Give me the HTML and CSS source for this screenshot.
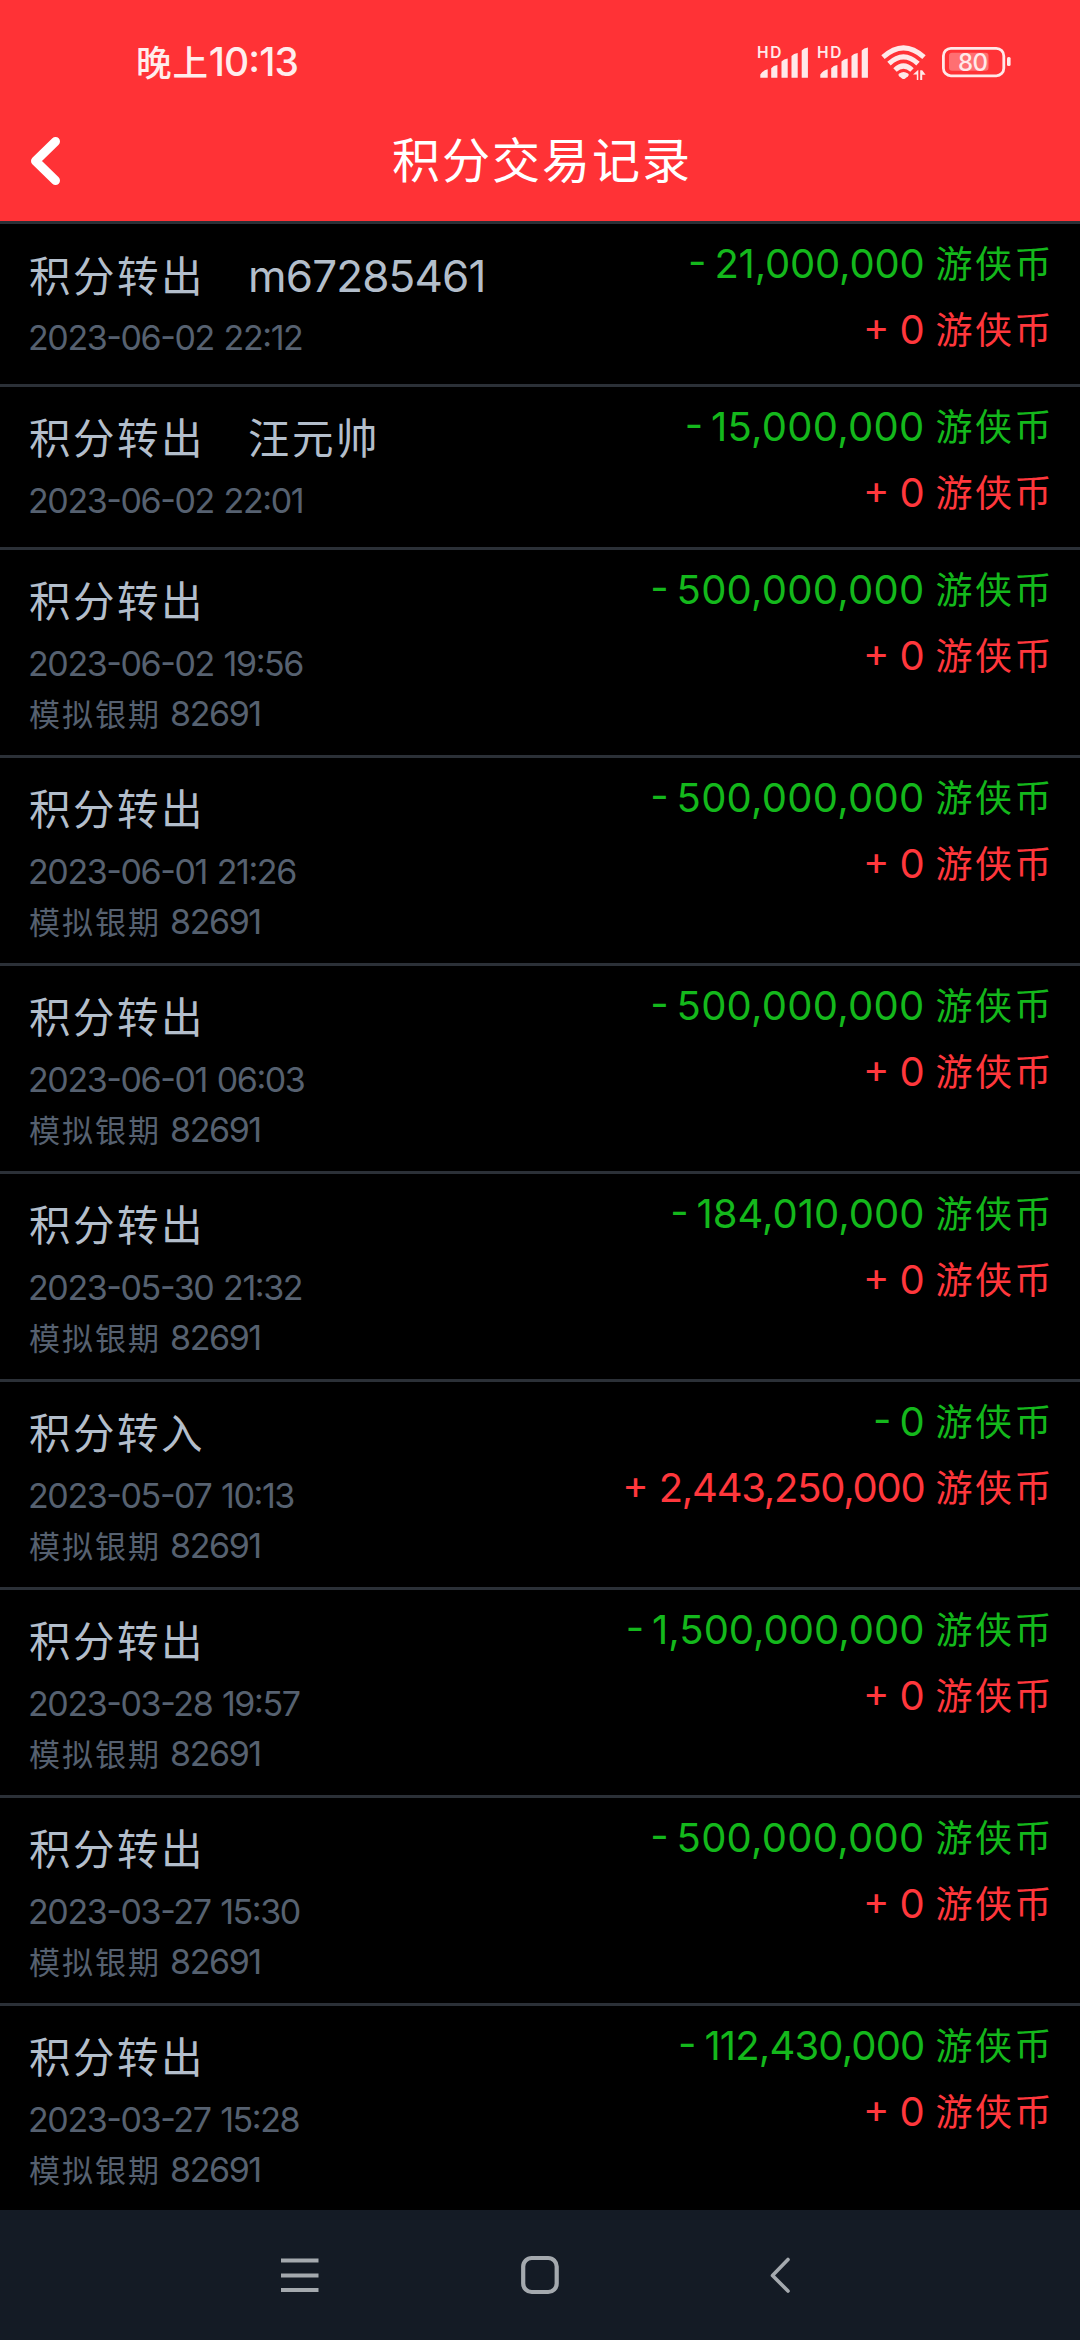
FILE: index.html
```html
<!DOCTYPE html>
<html lang="zh-CN">
<head>
<meta charset="utf-8">
<title>积分交易记录</title>
<link rel="stylesheet" href="styles.css">
</head>
<body>
<div class="screen">
  <header class="header">
    <div class="status">
      <div class="clock"><span class="clock-cjk">晚上</span>10:13</div>
      <svg class="status-icons" viewBox="750 40 265 44" aria-hidden="true">
        <defs>
          <g id="signal">
            <text class="hd" x="756" y="58" textLength="24.5">HD</text>
            <path d="M759.3 77.7v-3.2q3.2-4.400 7.400-5.200v8.400zM770.2 77.700v-9.500q2.300-2.700 6.200-3.200v12.700zM780.500 77.700v-16.200q2.200-2.600 6.200-3v19.200zM790.500 77.700v-21.700q2.200-2.600 6.200-3v24.700zM800.700 77.700v-27.200q2.200-2.600 6.200-3v30.200z"/>
          </g>
        </defs>
        <g class="ink">
          <use href="#signal"/>
          <use href="#signal" x="60"/>
          <path d="M898.200 73.500q4.400-3 8.800 0c1.200 1 .8 1.900 0 2.700l-2.800 2.300q-1.600 1.100-3.200 0l-2.800-2.300c-.9-.8-1.200-1.800 0-2.700z"/>
          <path d="M915.800 80v-5.500h-3.800l5.300-4.800v10.300zM919.200 70.300v9.700h2v-5.200h3.400l-3.400-4.500z"/>
          <rect x="1006" y="57" width="3.6" height="9" rx="1.500"/>
        </g>
        <g class="wave">
          <path d="M882 57.200Q902.500 38.500 923 57.200"/>
          <path d="M888 63.700Q902.500 50.200 917 63.700"/>
          <path d="M894 70Q902.500 62 911 70"/>
        </g>
        <rect class="level" x="948" y="52.700" width="39.500" height="18" rx="3"/>
        <rect class="shell" x="942.400" y="48.400" width="60.400" height="27.400" rx="7.500"/>
        <text class="percent" x="957" y="71" textLength="30">80</text>
      </svg>
    </div>
    <div class="titlebar">
      <svg class="back" viewBox="0 0 40 56" aria-hidden="true"><path d="M29.500 8.500L9.500 28L29.500 47.500"/></svg>
      <h1 class="title">积分交易记录</h1>
    </div>
  </header>
  <main class="list">
    <section class="row short">
      <div class="info">
        <div class="kind"><span class="cjk">积分转出</span><span class="who">m67285461</span></div>
        <div class="meta">2023-06-02 22:12</div>
      </div>
      <div class="sums">
        <div class="sum out"><span>-</span><span class="n">21,000,000</span><span class="unit">游侠币</span></div>
        <div class="sum in"><span>+</span><span class="n">0</span><span class="unit">游侠币</span></div>
      </div>
    </section>
    <section class="row short">
      <div class="info">
        <div class="kind"><span class="cjk">积分转出</span><span class="cjk">汪元帅</span></div>
        <div class="meta">2023-06-02 22:01</div>
      </div>
      <div class="sums">
        <div class="sum out"><span>-</span><span class="n wide">15,000,000</span><span class="unit">游侠币</span></div>
        <div class="sum in"><span>+</span><span class="n">0</span><span class="unit">游侠币</span></div>
      </div>
    </section>
    <section class="row">
      <div class="info">
        <div class="kind"><span class="cjk">积分转出</span></div>
        <div class="meta">2023-06-02 19:56</div>
        <div class="meta"><span class="bank">模拟银期</span>82691</div>
      </div>
      <div class="sums">
        <div class="sum out"><span>-</span><span class="n wide">500,000,000</span><span class="unit">游侠币</span></div>
        <div class="sum in"><span>+</span><span class="n">0</span><span class="unit">游侠币</span></div>
      </div>
    </section>
    <section class="row">
      <div class="info">
        <div class="kind"><span class="cjk">积分转出</span></div>
        <div class="meta">2023-06-01 21:26</div>
        <div class="meta"><span class="bank">模拟银期</span>82691</div>
      </div>
      <div class="sums">
        <div class="sum out"><span>-</span><span class="n wide">500,000,000</span><span class="unit">游侠币</span></div>
        <div class="sum in"><span>+</span><span class="n">0</span><span class="unit">游侠币</span></div>
      </div>
    </section>
    <section class="row">
      <div class="info">
        <div class="kind"><span class="cjk">积分转出</span></div>
        <div class="meta">2023-06-01 06:03</div>
        <div class="meta"><span class="bank">模拟银期</span>82691</div>
      </div>
      <div class="sums">
        <div class="sum out"><span>-</span><span class="n wide">500,000,000</span><span class="unit">游侠币</span></div>
        <div class="sum in"><span>+</span><span class="n">0</span><span class="unit">游侠币</span></div>
      </div>
    </section>
    <section class="row">
      <div class="info">
        <div class="kind"><span class="cjk">积分转出</span></div>
        <div class="meta">2023-05-30 21:32</div>
        <div class="meta"><span class="bank">模拟银期</span>82691</div>
      </div>
      <div class="sums">
        <div class="sum out"><span>-</span><span class="n loose">184,010,000</span><span class="unit">游侠币</span></div>
        <div class="sum in"><span>+</span><span class="n">0</span><span class="unit">游侠币</span></div>
      </div>
    </section>
    <section class="row">
      <div class="info">
        <div class="kind"><span class="cjk">积分转入</span></div>
        <div class="meta">2023-05-07 10:13</div>
        <div class="meta"><span class="bank">模拟银期</span>82691</div>
      </div>
      <div class="sums">
        <div class="sum out"><span>-</span><span class="n">0</span><span class="unit">游侠币</span></div>
        <div class="sum in"><span>+</span><span class="n narrow">2,443,250,000</span><span class="unit">游侠币</span></div>
      </div>
    </section>
    <section class="row">
      <div class="info">
        <div class="kind"><span class="cjk">积分转出</span></div>
        <div class="meta">2023-03-28 19:57</div>
        <div class="meta"><span class="bank">模拟银期</span>82691</div>
      </div>
      <div class="sums">
        <div class="sum out"><span>-</span><span class="n loose">1,500,000,000</span><span class="unit">游侠币</span></div>
        <div class="sum in"><span>+</span><span class="n">0</span><span class="unit">游侠币</span></div>
      </div>
    </section>
    <section class="row">
      <div class="info">
        <div class="kind"><span class="cjk">积分转出</span></div>
        <div class="meta">2023-03-27 15:30</div>
        <div class="meta"><span class="bank">模拟银期</span>82691</div>
      </div>
      <div class="sums">
        <div class="sum out"><span>-</span><span class="n wide">500,000,000</span><span class="unit">游侠币</span></div>
        <div class="sum in"><span>+</span><span class="n">0</span><span class="unit">游侠币</span></div>
      </div>
    </section>
    <section class="row">
      <div class="info">
        <div class="kind"><span class="cjk">积分转出</span></div>
        <div class="meta">2023-03-27 15:28</div>
        <div class="meta"><span class="bank">模拟银期</span>82691</div>
      </div>
      <div class="sums">
        <div class="sum out"><span>-</span><span class="n tight">112,430,000</span><span class="unit">游侠币</span></div>
        <div class="sum in"><span>+</span><span class="n">0</span><span class="unit">游侠币</span></div>
      </div>
    </section>
  </main>
  <nav class="nav">
    <svg viewBox="0 0 60 60" aria-hidden="true"><path class="bars" d="M11 16.500h37.500M11 31.500h37.500M11 46h37.500"/></svg>
    <svg viewBox="0 0 60 60" aria-hidden="true"><rect class="home" x="13.200" y="14" width="33.500" height="34" rx="8.500"/></svg>
    <svg viewBox="0 0 60 60" aria-hidden="true"><path class="chev" d="M38 15.500L22.500 31.500L38 47"/></svg>
  </nav>
</div>
</body>
</html>
```
FILE: styles.css
```css
* { box-sizing: border-box; }

body {
  margin: 0;
  background: #000;
  font-family: Inter, "Noto Sans CJK SC", sans-serif;
  font-feature-settings: "case";
}

.screen {
  display: flex;
  flex-direction: column;
  width: 1080px;
  height: 2340px;
  overflow: hidden;
}

/* Header */
.header {
  flex: none;
  height: 221px;
  background: #ff3236;
  color: #fff;
}

.status {
  display: flex;
  align-items: center;
  justify-content: space-between;
  height: 101px;
  padding: 23px 64px 0 136px;
}

.clock {
  font-size: 39px;
  font-weight: 500;
  line-height: 50px;
  letter-spacing: -0.9px;
  color: #ffeded;
}

.clock-cjk {
  font-size: 35.500px;
  line-height: 1;
  letter-spacing: 0.9px;
}

.status-icons { width: 265px; height: 44px; }
.status-icons .ink { fill: #ffe9e9; }
.status-icons .wave { fill: none; stroke: #ffe9e9; stroke-width: 5; }
.status-icons .shell { fill: none; stroke: #ffe9e9; stroke-width: 2.8; }
.status-icons .level { fill: #fff; fill-opacity: 0.3; }
.status-icons .hd { font-size: 15.5px; font-weight: 600; }
.status-icons .percent { font-size: 24px; font-weight: 500; fill: #ffe9e9; }

.titlebar {
  display: grid;
  grid-template-columns: 100px 1fr 100px;
  align-items: center;
  height: 119px;
}

.back { width: 40px; height: 56px; margin-left: 26px; }
.back path {
  fill: none;
  stroke: #fff;
  stroke-width: 9;
  stroke-linecap: round;
  stroke-linejoin: round;
}

.title {
  margin: 0;
  padding-left: 4px;
  text-align: center;
  font-size: 48px;
  font-weight: 400;
  line-height: 70px;
  letter-spacing: 2px;
}

/* Records */
.list { flex: none; height: 1989px; overflow: hidden; }

.row {
  display: flex;
  justify-content: space-between;
  height: 208px;
  padding: 0 26px 0 28px;
  border-top: 3px solid #2b3037;
}

.row.short { height: 163px; }

.info { padding-top: 22px; }

.kind {
  display: flex;
  align-items: baseline;
  gap: 43px;
  height: 60px;
  padding-left: 1px;
  font-size: 44px;
  line-height: 60px;
  color: #b3becb;
}

.who { letter-spacing: -0.85px; }

.cjk {
  font-size: 41.500px;
  letter-spacing: 2.5px;
}

.meta {
  height: 50px;
  font-size: 34px;
  line-height: 50px;
  letter-spacing: -1.4px;
  word-spacing: 1.5px;
  white-space: nowrap;
  color: #566170;
}

.kind + .meta { margin-top: 7px; }

.bank {
  margin: 0 9px 0 1px;
  font-size: 31px;
  line-height: 1;
  letter-spacing: 2px;
}

.sums { padding-top: 7px; }

.sum {
  display: flex;
  justify-content: flex-end;
  align-items: baseline;
  gap: 8px;
  height: 66px;
  font-size: 40px;
  line-height: 66px;
  white-space: nowrap;
}

.sum.in { gap: 10px; }
.out { color: #14b81c; }
.in { color: #ff373c; }

.n { letter-spacing: -0.2px; }
.n.wide { letter-spacing: 0.25px; }
.n.loose { letter-spacing: 0; }
.n.tight { letter-spacing: -0.85px; }
.n.narrow { letter-spacing: -1.25px; }

.unit {
  width: 118.500px;
  margin-left: 3px;
  font-size: 37px;
  letter-spacing: 2.5px;
}

.in .unit { margin-left: 1px; }

/* System navigation */
.nav {
  flex: none;
  display: flex;
  justify-content: space-between;
  height: 130px;
  padding: 34px 270px 0;
  background: #141b25;
}

.nav svg { width: 60px; height: 60px; }
.nav path, .nav rect {
  fill: none;
  stroke: #a4a9ae;
  stroke-linecap: round;
  stroke-linejoin: round;
}
.nav .bars { stroke-width: 4.200; stroke-linecap: butt; }
.nav .home { stroke-width: 4.200; }
.nav .chev { stroke-width: 3.600; }
```
